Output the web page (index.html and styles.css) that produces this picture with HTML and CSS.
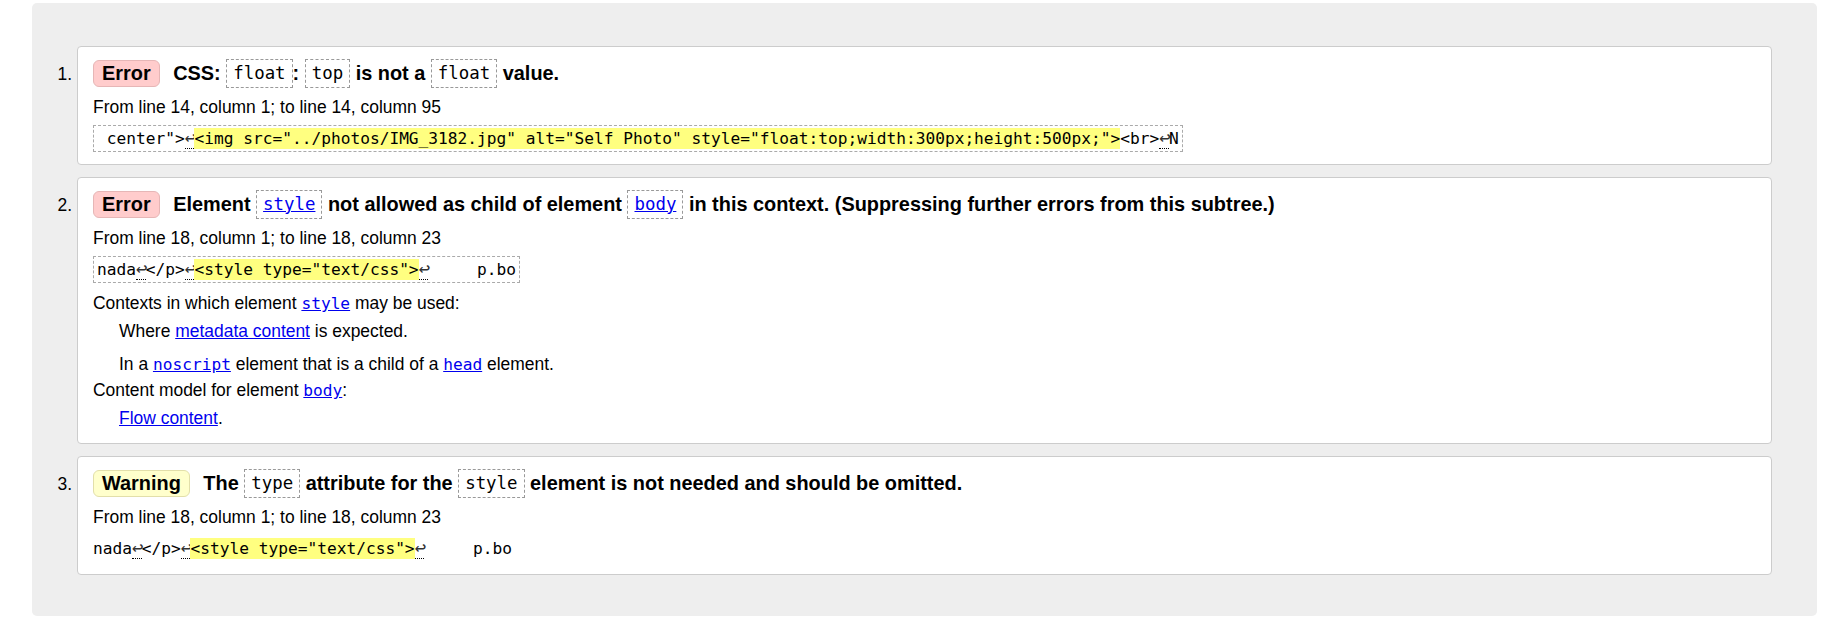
FILE: index.html
```html
<!DOCTYPE html>
<html lang="en">
<head>
<meta charset="utf-8">
<title>Validation results</title>
<link rel="stylesheet" href="styles.css">
</head>
<body>
<div class="results">
<ol class="messages">
<li class="msg error">
<p class="heading"><strong class="badge">Error</strong> CSS: <code class="term">float</code>: <code class="term">top</code> is not a <code class="term">float</code> value.</p>
<p class="location">From line 14, column 1; to line 14, column 95</p>
<p class="extract boxed"><code> center"&gt;<span class="lf">↩</span><b class="hl">&lt;img src="../photos/IMG_3182.jpg" alt="Self Photo" style="float:top;width:300px;height:500px;"&gt;</b>&lt;br&gt;<span class="lf">↩</span>N</code></p>
</li>
<li class="msg error">
<p class="heading"><strong class="badge">Error</strong> Element <code class="term"><a href="#">style</a></code> not allowed as child of element <code class="term"><a href="#">body</a></code> in this context. (Suppressing further errors from this subtree.)</p>
<p class="location">From line 18, column 1; to line 18, column 23</p>
<p class="extract boxed"><code>nada<span class="lf">↩</span>&lt;/p&gt;<span class="lf">↩</span><b class="hl">&lt;style type="text/css"&gt;</b><span class="lf">↩</span>     p.bo</code></p>
<dl class="info">
<dt>Contexts in which element <a href="#"><code>style</code></a> may be used:</dt>
<dd>Where <a href="#">metadata content</a> is expected.</dd>
<dd class="next">In a <a href="#"><code>noscript</code></a> element that is a child of a <a href="#"><code>head</code></a> element.</dd>
<dt>Content model for element <a href="#"><code>body</code></a>:</dt>
<dd><a href="#">Flow content</a>.</dd>
</dl>
</li>
<li class="msg warning">
<p class="heading"><strong class="badge">Warning</strong> The <code class="term">type</code> attribute for the <code class="term">style</code> element is not needed and should be omitted.</p>
<p class="location">From line 18, column 1; to line 18, column 23</p>
<p class="extract"><code>nada<span class="lf">↩</span>&lt;/p&gt;<span class="lf">↩</span><b class="hl">&lt;style type="text/css"&gt;</b><span class="lf">↩</span>     p.bo</code></p>
</li>
</ol>
</div>
</body>
</html>
```
FILE: styles.css
```css
html, body {
  margin: 0;
  padding: 0;
  background: #fff;
}

body {
  font-family: "Liberation Sans", Arial, sans-serif;
  font-size: 17.45px;
  color: #000;
}

a {
  color: #0000ee;
  text-decoration: underline;
}

code {
  font-family: "DejaVu Sans Mono", monospace;
  font-size: 16.2px;
}

.results {
  margin: 3px 20px 5px 32px;
  background: #eeeeee;
  border-radius: 5px;
  padding: 43px 45px 41px;
}

.messages {
  margin: 0;
  padding: 0;
  list-style: decimal outside;
}

.msg {
  background: #fff;
  border: 1px solid #cccccc;
  border-radius: 4px;
  padding: 12px 15px;
}

.msg + .msg {
  margin-top: 11.5px;
}

.heading {
  margin: 0;
  font-size: 19.9px;
  font-weight: bold;
  line-height: 29px;
  white-space: nowrap;
}

.badge {
  display: inline-block;
  vertical-align: top;
  margin: 1px 8px 0 0;
  padding: 0 8px;
  line-height: 25px;
  border: 1px solid;
  border-radius: 6px;
}

.error .badge {
  background: #ffcccc;
  border-color: #e6b6b6;
}

.warning .badge {
  background: #ffffcc;
  border-color: #e2dfaa;
}

.term {
  display: inline-block;
  vertical-align: top;
  font-size: 17.4px;
  font-weight: normal;
  line-height: 27px;
  padding: 0 6px;
  border: 1px dashed #999;
}

.location {
  margin: 6px 0 0;
  line-height: 26px;
}

.extract {
  margin: 5px 0 0;
  line-height: 27px;
}

.extract code {
  white-space: pre;
}

.boxed {
  width: fit-content;
  border: 1px dashed #aaa;
  padding: 0 3px;
  line-height: 25px;
}

.hl {
  background: #ffff80;
  font-weight: normal;
  padding: 1px 0;
}

.lf {
  display: inline-block;
  width: 9.75px;
  font-size: 19px;
  line-height: 16px;
  padding-bottom: 3px;
  text-align: center;
  color: #333;
  border-bottom: 1px dotted #000;
}

.info {
  margin: 7.5px 0 0;
  line-height: 26px;
}

.info code {
  line-height: 1;
}

.info dt {
  margin: 0;
}

.info dd {
  margin: 2px 0 0 26px;
}

.info dd.next {
  margin-top: 7px;
}
```
